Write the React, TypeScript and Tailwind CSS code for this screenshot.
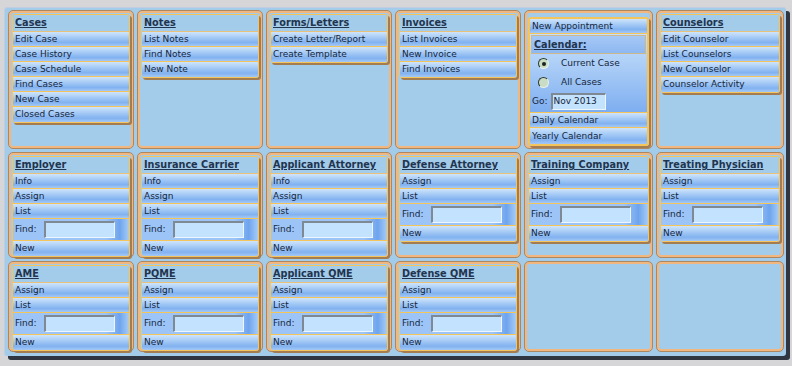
import React from "react";

type Panel = {
  title: string;
  rows: string[];
  find?: boolean;
};

const row1: Panel[] = [
  {
    title: "Cases",
    rows: ["Edit Case", "Case History", "Case Schedule", "Find Cases", "New Case", "Closed Cases"],
  },
  { title: "Notes", rows: ["List Notes", "Find Notes", "New Note"] },
  { title: "Forms/Letters", rows: ["Create Letter/Report", "Create Template"] },
  { title: "Invoices", rows: ["List Invoices", "New Invoice", "Find Invoices"] },
];

const row2: Panel[] = [
  { title: "Employer", rows: ["Info", "Assign", "List"], find: true },
  { title: "Insurance Carrier", rows: ["Info", "Assign", "List"], find: true },
  { title: "Applicant Attorney", rows: ["Info", "Assign", "List"], find: true },
  { title: "Defense Attorney", rows: ["Assign", "List"], find: true },
  { title: "Training Company", rows: ["Assign", "List"], find: true },
  { title: "Treating Physician", rows: ["Assign", "List"], find: true },
];

const row3: Panel[] = [
  { title: "AME", rows: ["Assign", "List"], find: true },
  { title: "PQME", rows: ["Assign", "List"], find: true },
  { title: "Applicant QME", rows: ["Assign", "List"], find: true },
  { title: "Defense QME", rows: ["Assign", "List"], find: true },
];

const font = "font-['DejaVu_Sans',Verdana,sans-serif]";

function MenuRow({ label, last, tall }: { label: string; last?: boolean; tall?: boolean }) {
  return (
    <div
      className={`${tall ? "h-[16px]" : "h-[15px]"} flex items-center pl-[2px] text-[9px] leading-none text-[#16263c] bg-[linear-gradient(to_bottom,#cfe4fb_0%,#a9cdf6_35%,#82b2f0_75%,#a4c8f6_100%)] ${
        last ? "" : "border-b border-[#f3c55a]"
      }`}
    >
      {label}
    </div>
  );
}

function FindRow() {
  return (
    <div className="h-[22px] flex items-center pl-[2px] gap-[8px] text-[9px] text-[#16263c] border-b border-[#f3c55a] bg-[linear-gradient(to_right,#9cc4f6_0%,#9cc4f6_80%,#6ea4ee_92%,#a6ccf6_100%)]">
      <span>Find:</span>
      <div className="w-[71px] h-[17px] bg-[#c3e2fd] border-t-2 border-l-2 border-[#7f8994] border-b border-r border-b-[#eef6fd] border-r-[#eef6fd]" />
    </div>
  );
}

function MenuPanel({ panel }: { panel: Panel }) {
  return (
    <div className="border border-[#f3c55a] rounded-[3px] shadow-[2px_2px_0_#a47c52] overflow-hidden">
      <div className="h-[17px] flex items-center pl-[2px] border-b border-[#e8c27a] bg-[#a3cbea]">
        <span className="text-[9.7px] font-bold underline text-[#22344e] leading-none">{panel.title}</span>
      </div>
      {panel.rows.map((r, i) => (
        <MenuRow key={i} label={r} last={!panel.find && i === panel.rows.length - 1} />
      ))}
      {panel.find && (
        <>
          <FindRow />
          <MenuRow label="New" last />
        </>
      )}
    </div>
  );
}

function Cell({ children }: { children?: React.ReactNode }) {
  return (
    <div className="rounded-[5px] border border-[#ad8760] shadow-[inset_0_0_0_2px_#f1b77f] bg-[#a3cbea] p-[3px]">
      {children}
    </div>
  );
}

function Radio({ checked, label }: { checked?: boolean; label: string }) {
  return (
    <div className="h-[19px] flex items-center pl-[8px]">
      <div className="w-[11px] h-[11px] rounded-full bg-[#c9dcc6] border-t border-l border-[#2c3a2c] border-b border-r border-b-[#e8f0e8] border-r-[#e8f0e8] flex items-center justify-center">
        {checked && <div className="w-[4px] h-[4px] rounded-full bg-[#1c241c]" />}
      </div>
      <span className="ml-[12px] text-[9px] text-[#16263c]">{label}</span>
    </div>
  );
}

function CalendarPanel() {
  return (
    <div className="border-2 border-[#f3c55a] rounded-[3px] shadow-[2px_2px_0_#a47c52] overflow-hidden mt-[3px]">
      <MenuRow label="New Appointment" />
      <div className="border-b border-[#f3c55a] bg-[linear-gradient(to_bottom,#c8e0fb_0%,#a8cbf6_45%,#7eaef0_100%)] pt-[1px] pb-[1px]">
        <div className="mx-[1px] h-[19px] flex items-center pl-[2px] border border-[#cdb88e] bg-[linear-gradient(to_bottom,#a6c8f4,#8eb8f2)]">
          <span className="text-[9.7px] font-bold underline text-[#22344e] leading-none">Calendar:</span>
        </div>
        <Radio checked label="Current Case" />
        <Radio label="All Cases" />
        <div className="h-[19px] flex items-center pl-[2px] gap-[3px] text-[9px] text-[#16263c]">
          <span>Go:</span>
          <div className="w-[55px] h-[17px] bg-[#c3e2fd] border-t-2 border-l-2 border-[#7f8994] border-b border-r border-b-[#eef6fd] border-r-[#eef6fd] flex items-center pl-[1px] text-[9px]">
            Nov 2013
          </div>
        </div>
      </div>
      <MenuRow label="Daily Calendar" />
      <MenuRow label="Yearly Calendar" last tall />
    </div>
  );
}

export default function App() {
  return (
    <div className={`w-[792px] h-[366px] bg-[#d6d6d8] pt-[7px] pl-[4px] ${font}`}>
      <div className="w-[782px] h-[349px] bg-[#a3cbea] rounded-[3px] shadow-[4px_4px_0_#2f3541] border-l border-t border-[#c4cde0] pt-[2px] pl-[3px] pr-[2px]">
        <div className="grid grid-cols-[126px_126px_126px_126px_129px_128px] grid-rows-[139px_106px_91px] gap-[3px]">
          {row1.map((p) => (
            <Cell key={p.title}>
              <MenuPanel panel={p} />
            </Cell>
          ))}
          <Cell>
            <CalendarPanel />
          </Cell>
          <Cell>
            <MenuPanel
              panel={{
                title: "Counselors",
                rows: ["Edit Counselor", "List Counselors", "New Counselor", "Counselor Activity"],
              }}
            />
          </Cell>
          {row2.map((p) => (
            <Cell key={p.title}>
              <MenuPanel panel={p} />
            </Cell>
          ))}
          {row3.map((p) => (
            <Cell key={p.title}>
              <MenuPanel panel={p} />
            </Cell>
          ))}
          <Cell />
          <Cell />
        </div>
      </div>
    </div>
  );
}
